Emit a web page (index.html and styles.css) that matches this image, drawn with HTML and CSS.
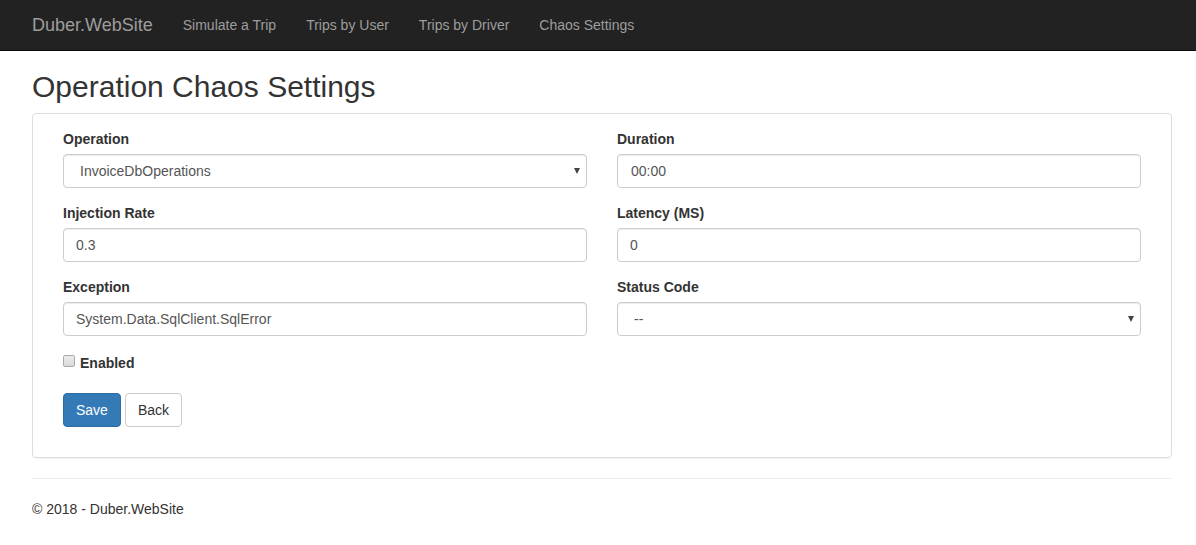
FILE: index.html
```html
<!DOCTYPE html>
<html lang="en">
<head>
<meta charset="utf-8">
<title>Operation Chaos Settings - Duber.WebSite</title>
<link rel="stylesheet" href="styles.css">
</head>
<body>
<nav class="navbar">
  <a class="brand" href="#">Duber.WebSite</a>
  <a class="nav-link" href="#">Simulate a Trip</a>
  <a class="nav-link" href="#">Trips by User</a>
  <a class="nav-link" href="#">Trips by Driver</a>
  <a class="nav-link" href="#">Chaos Settings</a>
</nav>
<main class="container">
  <h2 class="title">Operation Chaos Settings</h2>
  <form class="panel">
    <div class="grid">
      <div class="field">
        <label class="label" for="operation">Operation</label>
        <div class="select-wrap">
          <select class="control select" id="operation"><option>InvoiceDbOperations</option></select>
          <svg class="arrow" viewBox="0 0 6 6" aria-hidden="true"><path d="M0 0h6L3 6z"/></svg>
        </div>
      </div>
      <div class="field">
        <label class="label" for="duration">Duration</label>
        <input class="control time" id="duration" type="text" value="00:00">
      </div>
      <div class="field">
        <label class="label" for="rate">Injection Rate</label>
        <input class="control" id="rate" type="text" value="0.3">
      </div>
      <div class="field">
        <label class="label" for="latency">Latency (MS)</label>
        <input class="control" id="latency" type="text" value="0">
      </div>
      <div class="field">
        <label class="label" for="exception">Exception</label>
        <input class="control" id="exception" type="text" value="System.Data.SqlClient.SqlError">
      </div>
      <div class="field">
        <label class="label" for="status">Status Code</label>
        <div class="select-wrap">
          <select class="control select" id="status"><option>--</option></select>
          <svg class="arrow" viewBox="0 0 6 6" aria-hidden="true"><path d="M0 0h6L3 6z"/></svg>
        </div>
      </div>
    </div>
    <div class="check-row">
      <input class="check" id="enabled" type="checkbox">
      <label class="check-label" for="enabled">Enabled</label>
    </div>
    <div class="actions">
      <button class="btn btn-primary" type="submit">Save</button>
      <button class="btn" type="button">Back</button>
    </div>
  </form>
  <footer class="footer">© 2018 - Duber.WebSite</footer>
</main>
</body>
</html>
```
FILE: styles.css
```css
* {
  box-sizing: border-box;
}

body {
  margin: 0;
  font: 14px/20px "Liberation Sans", Arial, sans-serif;
  color: #333;
  background: #fff;
}

.navbar {
  display: flex;
  align-items: center;
  min-height: 51px;
  padding: 0 17px;
  background: #222;
  border-bottom: 1px solid #080808;
}

.brand,
.nav-link {
  padding: 15px;
  color: #9d9d9d;
  text-decoration: none;
}

.brand {
  font-size: 18px;
}

.container {
  padding: 0 24px 0 32px;
}

.title {
  margin: 19px 0 10px;
  font-size: 30px;
  font-weight: 400;
  line-height: 33px;
}

.panel {
  padding: 15px 30px 30px;
  border: 1px solid #ddd;
  border-radius: 4px;
  box-shadow: 0 1px 1px rgba(0, 0, 0, 0.05);
}

.grid {
  display: grid;
  grid-template-columns: 1fr 1fr;
  gap: 15px 30px;
}

.label {
  display: block;
  margin-bottom: 5px;
  font-weight: 700;
}

.control {
  display: block;
  width: 100%;
  height: 34px;
  padding: 6px 12px;
  font: inherit;
  color: #555;
  background: #fff;
  border: 1px solid #ccc;
  border-radius: 4px;
  box-shadow: inset 0 1px 1px rgba(0, 0, 0, 0.075);
}

.time {
  padding-left: 13px;
}

.select-wrap {
  position: relative;
}

.select {
  padding-left: 16px;
  appearance: none;
}

.arrow {
  position: absolute;
  top: 14px;
  right: 7px;
  width: 6px;
  height: 6px;
  fill: #444;
  pointer-events: none;
}

.check-row {
  display: flex;
  align-items: center;
  gap: 5px;
  margin-top: 17px;
}

.check {
  width: 12px;
  height: 12px;
  margin: 0 0 4px;
  appearance: none;
  border: 1px solid #aaa;
  border-radius: 2px;
  background: linear-gradient(#ececec, #dadada);
}

.check-label {
  font-weight: 700;
}

.actions {
  display: flex;
  gap: 4px;
  margin-top: 20px;
}

.btn {
  padding: 6px 12px;
  font: inherit;
  color: #333;
  background: #fff;
  border: 1px solid #ccc;
  border-radius: 4px;
}

.btn-primary {
  color: #fff;
  background: #337ab7;
  border-color: #2e6da4;
}

.footer {
  margin-top: 20px;
  padding: 20px 0;
  border-top: 1px solid #eee;
}
```
